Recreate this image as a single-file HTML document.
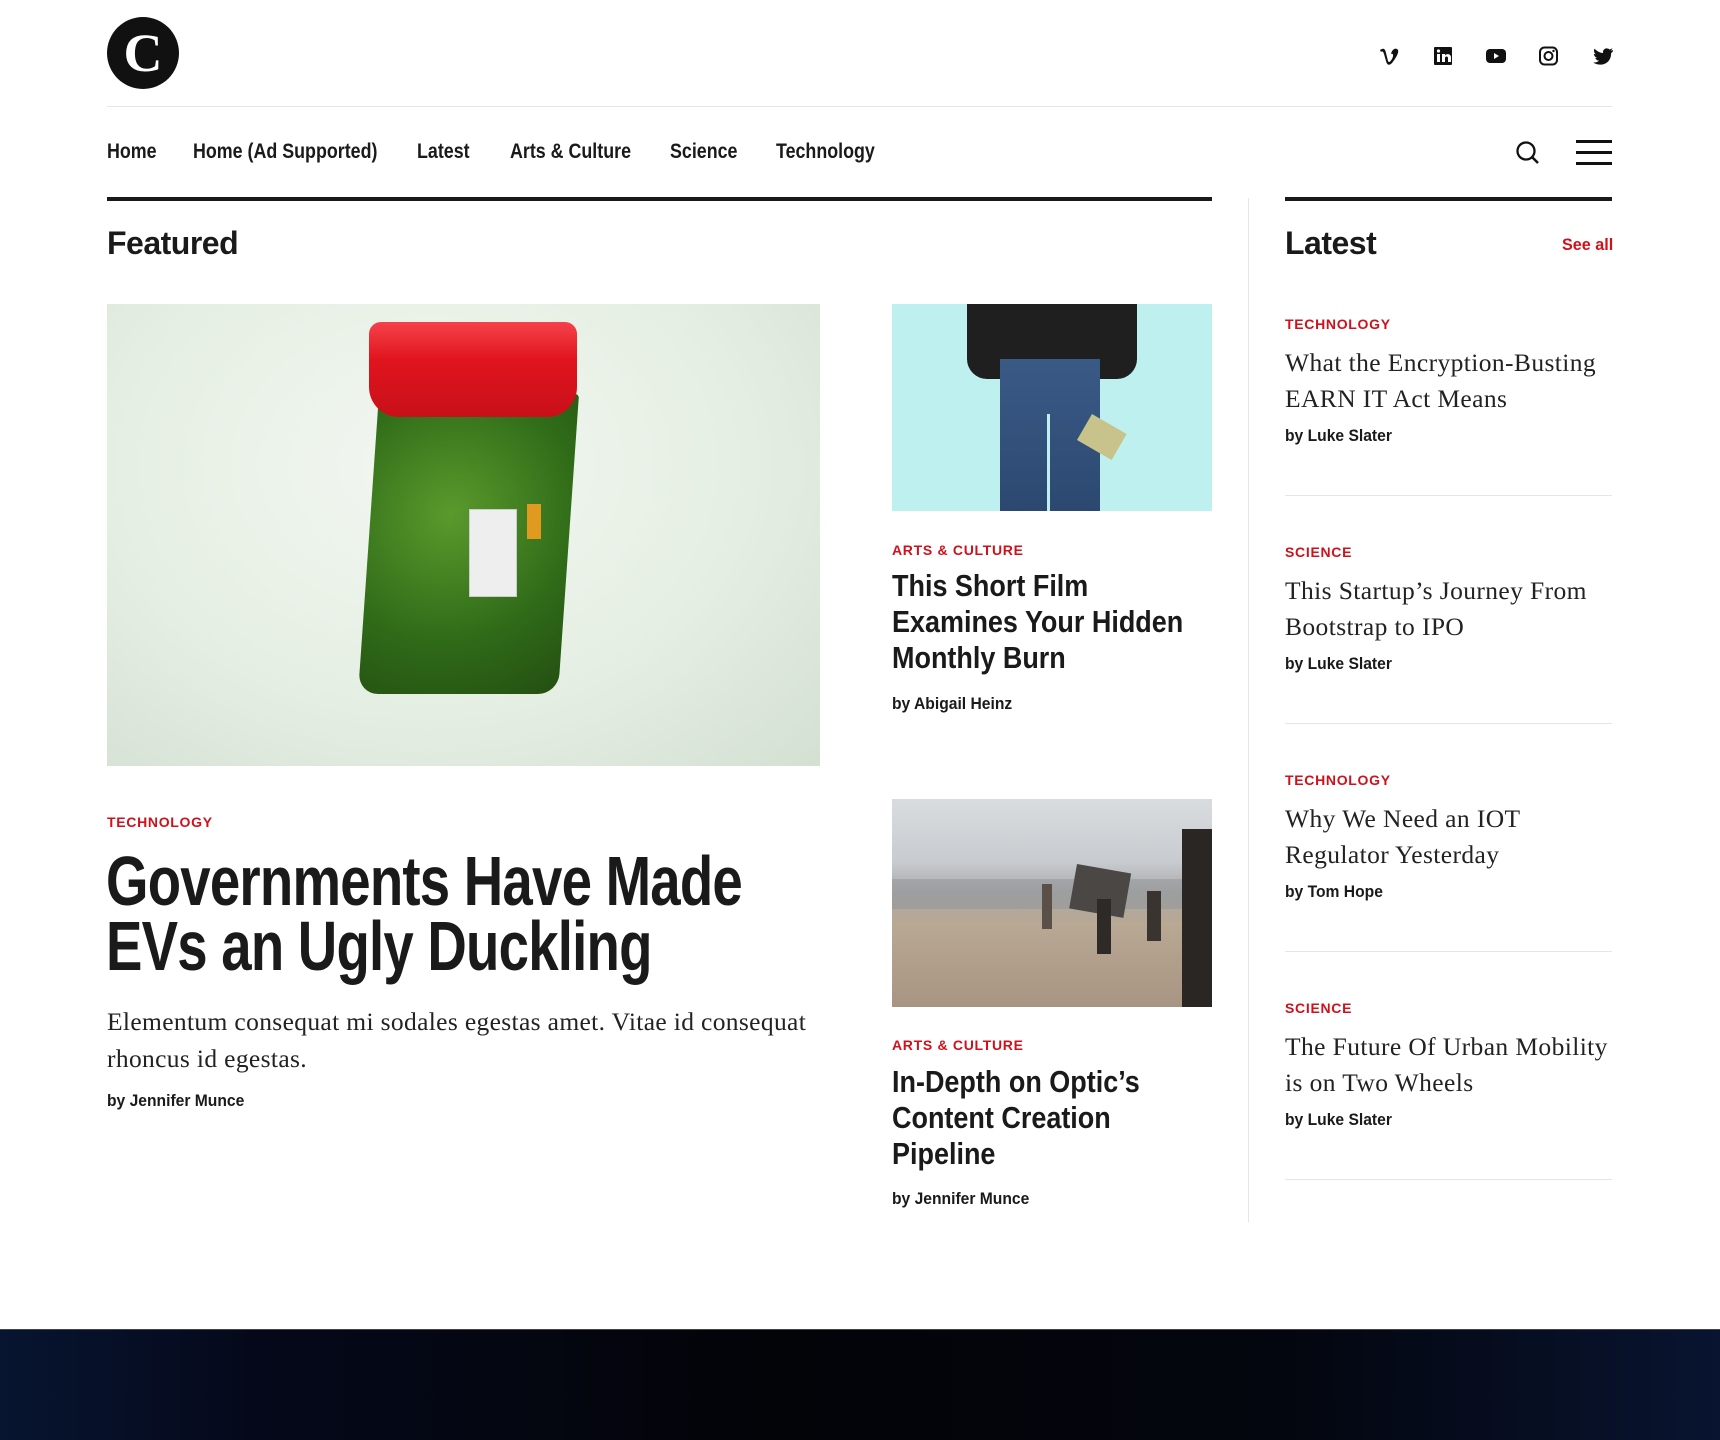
<!DOCTYPE html>
<html><head><meta charset="utf-8"><style>
*{margin:0;padding:0;box-sizing:border-box}
body{width:1720px;height:1440px;position:relative;background:#fff;overflow:hidden;font-family:"Liberation Sans",sans-serif;color:#1a1a1a}
.a{position:absolute;white-space:nowrap;transform-origin:0 0}
.nav{font-weight:bold;font-size:21px;line-height:30px;top:137px;transform:scaleX(.85)}
.cat{font-weight:bold;font-size:14px;letter-spacing:.7px;color:#d0111b;line-height:20px}
.by{font-weight:bold;font-size:17px;line-height:22px;color:#1a1a1a;transform:scaleX(.92)}
.t2{font-weight:bold;font-size:31px;line-height:36px;transform:scaleX(.87)}
.st{font-family:"Liberation Serif",serif;font-size:25.5px;line-height:36px;letter-spacing:.4px;color:#222}
.hr{position:absolute;height:1px;background:#e6e6e6}
</style></head><body>
<div class="a" style="left:107px;top:17px;width:72px;height:72px;border-radius:50%;background:#111"></div>
<div class="a" style="left:107px;top:17px;width:72px;height:72px;text-align:center;font-family:'Liberation Serif',serif;font-weight:bold;font-size:54px;line-height:72px;color:#fff">C</div>
<svg class="a" style="left:1379px;top:45px" width="240" height="22" viewBox="0 0 240 22">
<path d="M1 5 C4 3 6 3 7 8 L9 16 C10 18 11 17 13 14 C15 10 14 8 12 9 C13 4 17 2 19 5 C20 8 17 13 13 18 C10 21 8 20 7 16 L5 9 C4 6 3 6 2 7Z" fill="#111"/>
<rect x="55" y="2" width="18" height="18" rx="1" fill="#111"/>
<rect x="58" y="9" width="3" height="8" fill="#fff"/><circle cx="59.5" cy="6" r="1.6" fill="#fff"/>
<path d="M63 9h3v1.5c1-2 6-2 6 2V17h-3v-4c0-2-3-2-3 0v4h-3z" fill="#fff"/>
<rect x="107" y="4" width="20" height="14" rx="4" fill="#111"/><path d="M115 8l5 3-5 3z" fill="#fff"/>
<rect x="161" y="2.5" width="17" height="17" rx="4.5" fill="none" stroke="#111" stroke-width="2"/><circle cx="169.5" cy="11" r="4" fill="none" stroke="#111" stroke-width="2"/><circle cx="174.5" cy="6" r="1.2" fill="#111"/>
<path d="M234 5c-1 .5-2 .7-2.5.8 1-.6 1.6-1.5 2-2.5-1 .6-2 1-3 1.2-2-2-6-1.5-6.5 2.2 0 .5 0 1 .1 1.3-3.5-.2-6.5-2-8.5-4.4-1.2 2-.5 4.5 1.3 5.6-.7 0-1.3-.2-2-.5 0 2 1.5 3.7 3.4 4.1-.6.2-1.300.2-2 .1.6 1.6 2 2.8 3.8 2.8-1.8 1.4-4 2-6 1.8 8 5 18 1 18-9v-.4c.8-.6 1.5-1.3 2-2.1z" fill="#111"/>
</svg>
<div class="hr" style="left:107px;top:106px;width:1505px"></div>
<div class="a nav" style="left:107px">Home</div>
<div class="a nav" style="left:193px">Home (Ad Supported)</div>
<div class="a nav" style="left:417px">Latest</div>
<div class="a nav" style="left:510px">Arts &amp; Culture</div>
<div class="a nav" style="left:670px">Science</div>
<div class="a nav" style="left:776px">Technology</div>
<svg class="a" style="left:1515px;top:140px" width="26" height="26"><circle cx="11" cy="11" r="8.5" fill="none" stroke="#111" stroke-width="2.3"/><path d="M17 17l6 6" stroke="#111" stroke-width="2.5"/></svg>
<div class="a" style="left:1576px;top:140px;width:36px;height:2.5px;background:#111"></div>
<div class="a" style="left:1576px;top:151px;width:36px;height:2.5px;background:#111"></div>
<div class="a" style="left:1576px;top:162px;width:36px;height:2.5px;background:#111"></div>
<div class="a" style="left:107px;top:197px;width:1105px;height:4px;background:#1a1a1a"></div>
<div class="a" style="left:1285px;top:197px;width:327px;height:4px;background:#1a1a1a"></div>
<div class="a" style="left:1248px;top:198px;width:1px;height:1024px;background:#e6e6e6"></div>
<div class="a" style="left:107px;top:223px;font-weight:bold;font-size:32px;line-height:40px;letter-spacing:-0.5px">Featured</div>
<div class="a" style="left:1285px;top:223px;font-weight:bold;font-size:32px;line-height:40px;letter-spacing:-0.5px">Latest</div>
<div class="a" style="left:1562px;top:234px;font-weight:bold;font-size:17px;line-height:22px;color:#d0111b;transform:scaleX(.95)">See all</div>
<div class="a" style="left:107px;top:304px;width:713px;height:462px;background:radial-gradient(ellipse at 45% 35%,#f2f7f1 0%,#e6efe4 55%,#d3e0d2 100%);overflow:hidden">
 <div class="a" style="left:272px;top:90px;width:200px;height:300px;background:radial-gradient(circle at 40% 40%,#5a9a2c,#2f6a18 60%,#244f12);border-radius:4px 4px 20px 20px;transform:skewX(-4deg)"></div>
 <div class="a" style="left:362px;top:205px;width:48px;height:88px;background:#eee;border:1px solid #ccc"></div>
 <div class="a" style="left:420px;top:200px;width:14px;height:35px;background:#e09a20"></div>
 <div class="a" style="left:262px;top:18px;width:208px;height:95px;background:linear-gradient(#f5424a,#e0141e 40%,#c8101a);border-radius:12px 12px 30px 30px"></div>
</div>
<div class="a" style="left:892px;top:304px;width:320px;height:207px;background:#bff0f0;overflow:hidden">
 <div class="a" style="left:75px;top:-5px;width:170px;height:80px;background:#1f1f1f;border-radius:0 0 20px 20px"></div>
 <div class="a" style="left:108px;top:55px;width:100px;height:155px;background:linear-gradient(#3a5a86,#2c4870)"></div>
 <div class="a" style="left:155px;top:110px;width:3px;height:100px;background:#bff0f0"></div>
 <div class="a" style="left:200px;top:110px;width:40px;height:30px;background:#c7c38a;transform:rotate(30deg)"></div>
</div>
<div class="a cat" style="left:892px;top:540px">ARTS &amp; CULTURE</div>
<div class="a t2" style="left:892px;top:568px">This Short Film<br>Examines Your Hidden<br>Monthly Burn</div>
<div class="a by" style="left:892px;top:693px">by Abigail Heinz</div>
<div class="a" style="left:892px;top:799px;width:320px;height:208px;background:linear-gradient(#d9dcdf 0%,#c8ccd0 30%,#a9a8a5 45%,#b8a894 60%,#a89482 100%);overflow:hidden">
 <div class="a" style="left:0;top:80px;width:320px;height:30px;background:#8f949a;opacity:.5"></div>
 <div class="a" style="left:290px;top:30px;width:30px;height:178px;background:#2a2624"></div>
 <div class="a" style="left:185px;top:65px;width:55px;height:45px;background:#4a4744;transform:rotate(10deg)"></div>
 <div class="a" style="left:150px;top:85px;width:10px;height:45px;background:#5a5048"></div>
 <div class="a" style="left:205px;top:100px;width:14px;height:55px;background:#2e2a28"></div>
 <div class="a" style="left:255px;top:92px;width:14px;height:50px;background:#3a3430"></div>
</div>
<div class="a cat" style="left:892px;top:1035px">ARTS &amp; CULTURE</div>
<div class="a t2" style="left:892px;top:1064px">In-Depth on Optic’s<br>Content Creation<br>Pipeline</div>
<div class="a by" style="left:892px;top:1188px">by Jennifer Munce</div>
<div class="a cat" style="left:107px;top:812px">TECHNOLOGY</div>
<div class="a" style="left:106px;top:849px;font-weight:bold;font-size:70px;line-height:65px;letter-spacing:-1px;transform:scaleX(.78)">Governments Have Made<br>EVs an Ugly Duckling</div>
<div class="a" style="left:107px;top:1003px;font-family:'Liberation Serif',serif;font-size:25.5px;line-height:37px;letter-spacing:.35px;color:#222">Elementum consequat mi sodales egestas amet. Vitae id consequat<br>rhoncus id egestas.</div>
<div class="a by" style="left:107px;top:1090px">by Jennifer Munce</div>
<div class="a cat" style="left:1285px;top:314px">TECHNOLOGY</div>
<div class="a st" style="left:1285px;top:345px">What the Encryption-Busting<br>EARN IT Act Means</div>
<div class="a by" style="left:1285px;top:425px">by Luke Slater</div>
<div class="hr" style="left:1285px;top:495px;width:327px"></div>
<div class="a cat" style="left:1285px;top:542px">SCIENCE</div>
<div class="a st" style="left:1285px;top:573px">This Startup’s Journey From<br>Bootstrap to IPO</div>
<div class="a by" style="left:1285px;top:653px">by Luke Slater</div>
<div class="hr" style="left:1285px;top:723px;width:327px"></div>
<div class="a cat" style="left:1285px;top:770px">TECHNOLOGY</div>
<div class="a st" style="left:1285px;top:801px">Why We Need an IOT<br>Regulator Yesterday</div>
<div class="a by" style="left:1285px;top:881px">by Tom Hope</div>
<div class="hr" style="left:1285px;top:951px;width:327px"></div>
<div class="a cat" style="left:1285px;top:998px">SCIENCE</div>
<div class="a st" style="left:1285px;top:1029px">The Future Of Urban Mobility<br>is on Two Wheels</div>
<div class="a by" style="left:1285px;top:1109px">by Luke Slater</div>
<div class="hr" style="left:1285px;top:1179px;width:327px"></div>
<div class="a" style="left:0;top:1329px;width:1720px;height:111px;background:linear-gradient(90deg,#071530 0%,#05081a 15%,#030408 45%,#04060f 75%,#081430 100%);border-top:1px solid #444"></div>
</body></html>
